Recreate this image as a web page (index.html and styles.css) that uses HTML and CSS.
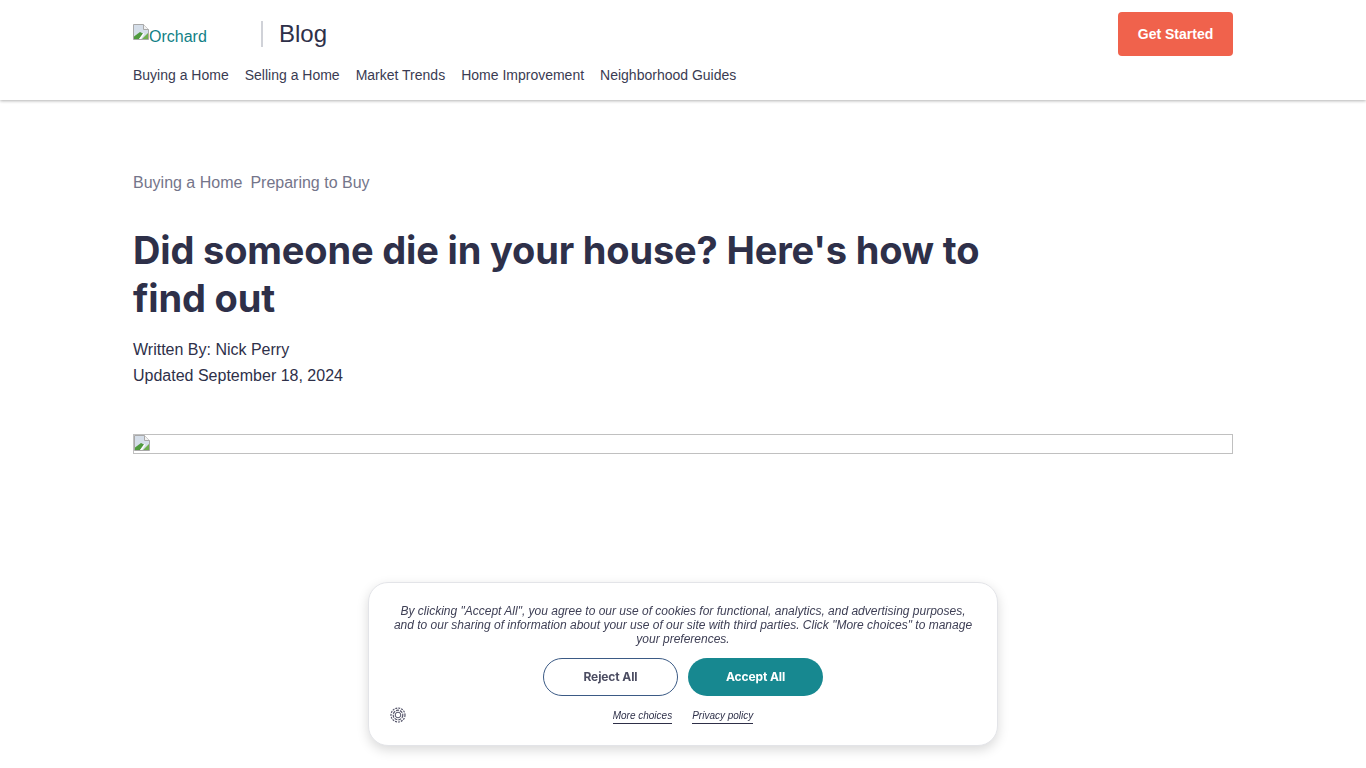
FILE: index.html
```html
<!DOCTYPE html>
<html lang="en">
<head>
<meta charset="utf-8">
<title>Did someone die in your house? Here's how to find out</title>
<link rel="stylesheet" href="styles.css">
</head>
<body>
<header class="site-header">
  <div class="container header-inner">
    <div class="header-left">
      <div class="brand-row">
        <a class="logo" href="#"><svg class="broken" viewBox="0 0 16 16" width="16" height="16"><path d="M.5.5h10l5 5v10H.5z" fill="#d5dee9" stroke="#a9a9a9"/><path d="M10.5.5v5h5" fill="#f2f2f2" stroke="#a9a9a9"/><path d="M1 15v-2.5L7 8l3 1.5-4 5.5z" fill="#4f9a3e"/><path d="M9 15l6-6v6z" fill="#6fae4f"/><path d="M6 15l4.5-6 1 .5L8 15z" fill="#fff"/></svg><span class="logo-alt">Orchard</span></a>
        <span class="divider"></span>
        <span class="blog">Blog</span>
      </div>
      <nav class="nav">
        <a href="#">Buying a Home</a>
        <a href="#">Selling a Home</a>
        <a href="#">Market Trends</a>
        <a href="#">Home Improvement</a>
        <a href="#">Neighborhood Guides</a>
      </nav>
    </div>
    <a class="cta" href="#">Get Started</a>
  </div>
</header>
<main class="container main">
  <div class="crumbs"><a href="#">Buying a Home</a><a href="#">Preparing to Buy</a></div>
  <h1 class="title">Did someone die in your house? Here's how to find out</h1>
  <p class="meta">Written By: Nick Perry</p>
  <p class="meta">Updated September 18, 2024</p>
  <div class="hero"><svg class="broken" viewBox="0 0 16 16" width="16" height="16"><path d="M.5.5h10l5 5v10H.5z" fill="#d5dee9" stroke="#a9a9a9"/><path d="M10.5.5v5h5" fill="#f2f2f2" stroke="#a9a9a9"/><path d="M1 15v-2.5L7 8l3 1.5-4 5.5z" fill="#4f9a3e"/><path d="M9 15l6-6v6z" fill="#6fae4f"/><path d="M6 15l4.5-6 1 .5L8 15z" fill="#fff"/></svg></div>
</main>
<aside class="cookie">
  <p class="cookie-text">By clicking "Accept All", you agree to our use of cookies for functional, analytics, and advertising purposes, and to our sharing of information about your use of our site with third parties. Click "More choices" to manage your preferences.</p>
  <div class="cookie-actions">
    <button class="pill pill-reject">Reject All</button>
    <button class="pill pill-accept">Accept All</button>
  </div>
  <div class="cookie-links">
    <a href="#">More choices</a>
    <a href="#">Privacy policy</a>
  </div>
  <svg class="cookie-icon" viewBox="0 0 16 16" width="16" height="16" fill="none" stroke="#55556a"><circle cx="8" cy="8" r="7" stroke-width="1.2" stroke-dasharray="2 1"/><circle cx="8" cy="8" r="4.8" stroke-width="1.2" stroke-dasharray="3 1"/><circle cx="8" cy="8" r="2.8" stroke-width="1"/></svg>
</aside>
</body>
</html>
```
FILE: styles.css
```css
* { box-sizing: border-box; }
html, body { margin: 0; padding: 0; }
body {
  background: #fff;
  color: #2e3049;
  font-family: "Liberation Sans", Arial, sans-serif;
  height: 768px;
  overflow: hidden;
}
a { color: inherit; text-decoration: none; }
.container { width: 1100px; margin: 0 auto; }
.site-header {
  height: 100px;
  background: #fff;
  box-shadow: 0 1px 3px rgba(0, 0, 0, .3);
}
.header-inner {
  display: flex;
  justify-content: space-between;
  align-items: flex-start;
  padding-top: 12px;
}
.brand-row { display: flex; align-items: center; height: 44px; }
.logo {
  display: flex;
  align-items: flex-start;
  width: 128px;
  margin-top: 1px;
  color: #117f86;
  font-size: 16px;
}
.broken { display: block; flex: none; }
.logo-alt { margin-top: 4px; line-height: 18px; }
.divider { width: 2px; height: 26px; background: #d0d2d8; margin-right: 16px; }
.blog { font-size: 24px; line-height: 30px; }
.nav {
  display: flex;
  gap: 16px;
  margin-top: 9px;
  font-size: 14px;
  line-height: 20px;
  color: #3a3b52;
}
.cta {
  width: 115px;
  height: 44px;
  display: flex;
  align-items: center;
  justify-content: center;
  background: #f0624c;
  color: #fff;
  border-radius: 4px;
  font-size: 14px;
  font-weight: 700;
}
.main { padding-top: 73px; }
.crumbs {
  display: flex;
  gap: 8px;
  font-size: 16px;
  line-height: 20px;
  color: #74758a;
}
.title {
  width: 880px;
  margin: 33px 0 0;
  font-family: Inter, "Liberation Sans", sans-serif;
  font-size: 38px;
  line-height: 48px;
  font-weight: 700;
  letter-spacing: -0.16px;
}
.meta { margin: 0; font-size: 16px; line-height: 26px; }
.title + .meta { margin-top: 15px; }
.hero {
  height: 20px;
  margin-top: 45px;
  border: 1px solid #c0c0c0;
}
.cookie {
  position: fixed;
  left: 368px;
  top: 582px;
  width: 630px;
  height: 164px;
  padding: 21px 24px 0;
  background: #fff;
  border: 1px solid #e3e4e8;
  border-radius: 20px;
  box-shadow: 0 4px 12px rgba(0, 0, 0, .15);
}
.cookie-text {
  margin: 0;
  font-size: 12px;
  font-style: italic;
  line-height: 14px;
  text-align: center;
  color: #3f4056;
}
.cookie-actions {
  display: flex;
  justify-content: center;
  gap: 10px;
  margin-top: 12px;
}
.pill {
  width: 135px;
  height: 38px;
  border-radius: 19px;
  font-family: Inter, "Liberation Sans", sans-serif;
  font-size: 12px;
  font-weight: 700;
  letter-spacing: -0.1px;
  padding: 0 0 2px;
}
.pill-reject { background: #fff; border: 1px solid #3b5a85; color: #4c4d62; }
.pill-accept { background: #178890; border: 0; color: #fff; }
.cookie-links {
  display: flex;
  justify-content: center;
  gap: 20px;
  margin-top: 13px;
  font-size: 10px;
  font-style: italic;
  line-height: 14px;
}
.cookie-links a { border-bottom: 1px solid #2e2f48; }
.cookie-icon { position: absolute; left: 21px; top: 124px; }
```
